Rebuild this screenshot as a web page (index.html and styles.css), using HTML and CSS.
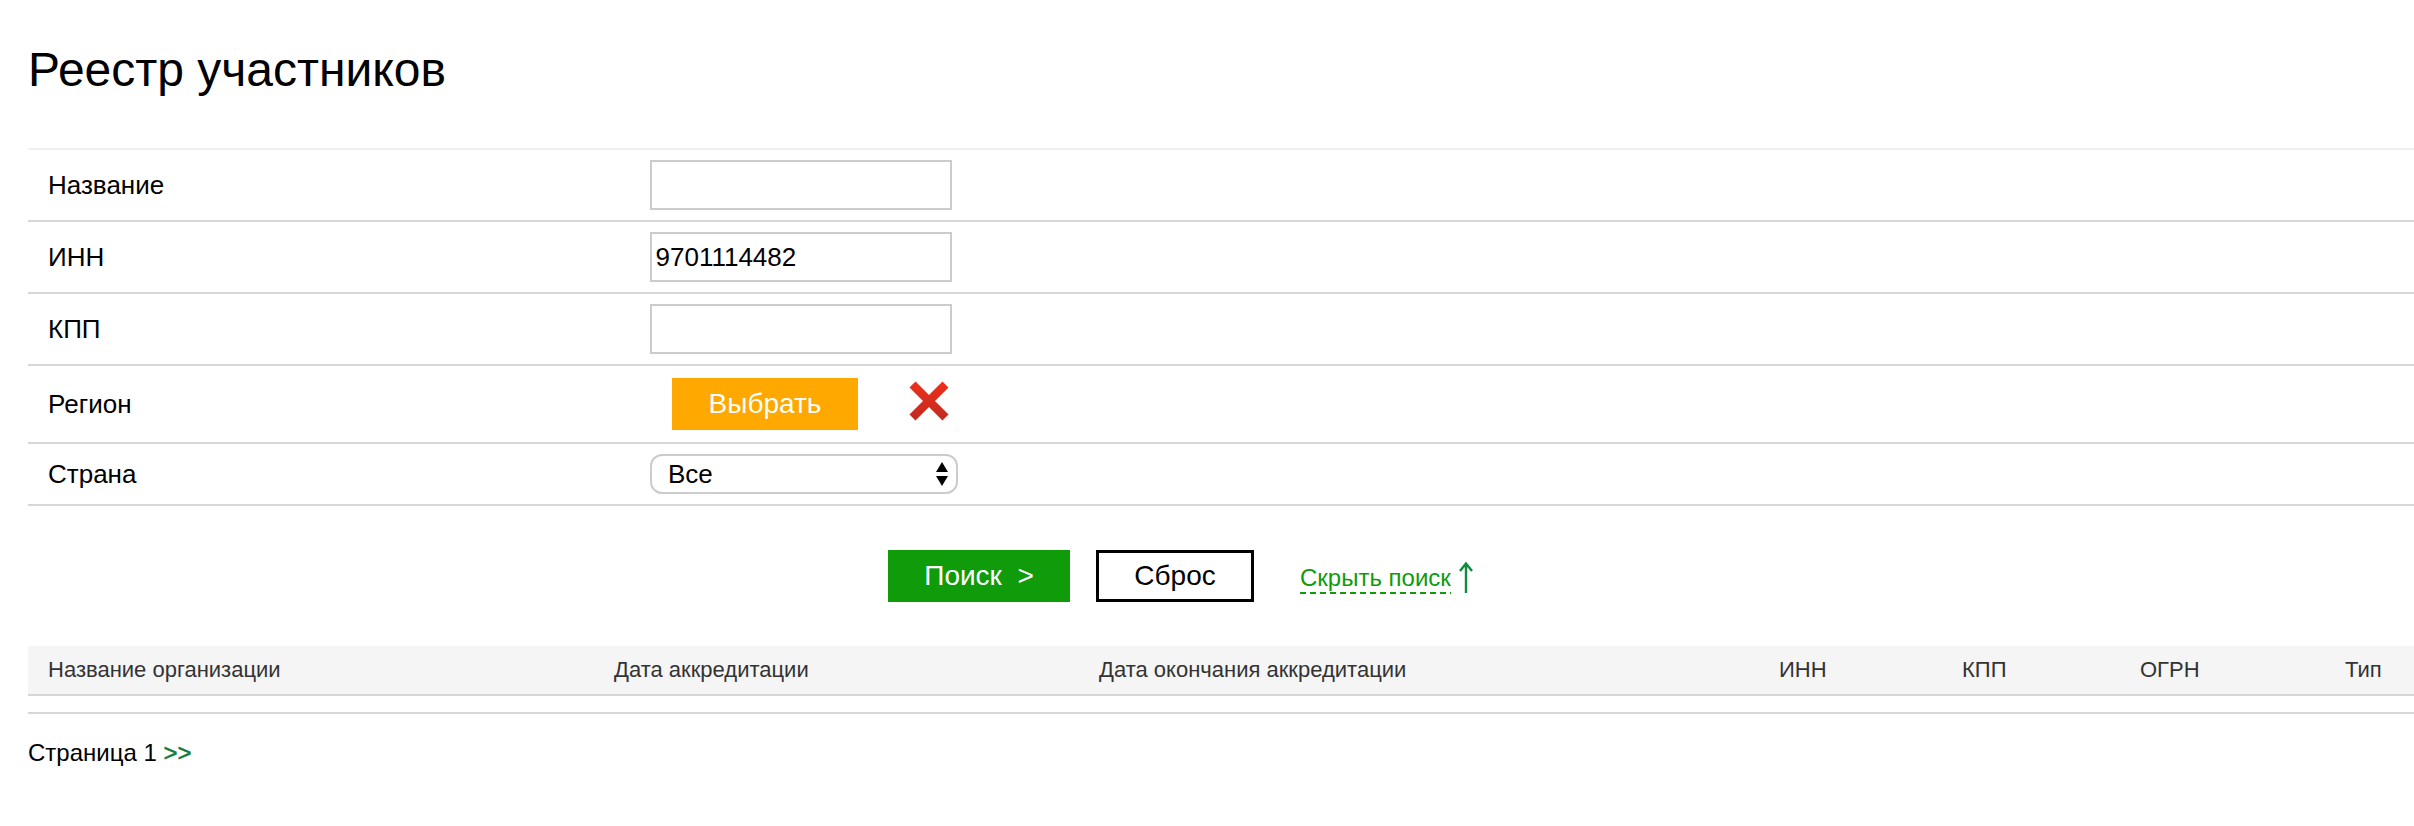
FILE: index.html
```html
<!DOCTYPE html>
<html lang="ru">
<head>
<meta charset="utf-8">
<title>Реестр участников</title>
<link rel="stylesheet" href="styles.css">
</head>
<body>
<main class="page">
  <h1 class="title">Реестр участников</h1>
  <form class="filters">
    <div class="row row-input first">
      <label class="label">Название</label>
      <input class="field" type="text">
    </div>
    <div class="row row-input">
      <label class="label">ИНН</label>
      <input class="field" type="text" value="9701114482">
    </div>
    <div class="row row-input">
      <label class="label">КПП</label>
      <input class="field" type="text">
    </div>
    <div class="row row-region">
      <label class="label">Регион</label>
      <div class="region-controls">
        <button class="btn btn-choose" type="button">Выбрать</button>
        <svg class="clear-icon" viewBox="0 0 42 42" width="42" height="42" aria-hidden="true">
          <defs>
            <linearGradient id="red" gradientUnits="userSpaceOnUse" x1="0" y1="0" x2="0" y2="42">
              <stop offset="0" stop-color="#f0301a"/>
              <stop offset="1" stop-color="#c02a20"/>
            </linearGradient>
          </defs>
          <path d="M4.5 4.5 L37.5 37.5 M37.5 4.5 L4.5 37.5" fill="none" stroke="url(#red)" stroke-width="8.5"/>
        </svg>
      </div>
    </div>
    <div class="row row-select">
      <label class="label">Страна</label>
      <div class="select-wrap">
        <select class="select"><option>Все</option></select>
        <svg class="select-arrows" viewBox="0 0 12 24" width="12" height="24" aria-hidden="true">
          <path d="M6 0 L12 10 H0 Z M0 14 H12 L6 24 Z" fill="#000"/>
        </svg>
      </div>
    </div>
    <div class="actions">
      <button class="btn btn-search" type="button">Поиск&nbsp; &gt;</button>
      <button class="btn btn-reset" type="button">Сброс</button>
      <a class="toggle" href="#"><span class="toggle-text">Скрыть поиск</span>
        <svg class="toggle-arrow" viewBox="0 0 14 31" width="14" height="31" aria-hidden="true">
          <path d="M7 31 V2 M1 9 L7 1.5 L13 9" fill="none" stroke="#0f8a3f" stroke-width="2.4"/>
        </svg>
      </a>
    </div>
  </form>
  <div class="results">
    <div class="thead">
      <span>Название организации</span>
      <span>Дата аккредитации</span>
      <span>Дата окончания аккредитации</span>
      <span>ИНН</span>
      <span>КПП</span>
      <span>ОГРН</span>
      <span>Тип</span>
    </div>
    <div class="tbody"></div>
  </div>
  <p class="pager">Страница 1 <a class="pager-next" href="#">&gt;&gt;</a></p>
</main>
</body>
</html>
```
FILE: styles.css
```css
* { box-sizing: border-box; }
html, body { margin: 0; padding: 0; background: #fff; }
body { font-family: "Liberation Sans", Arial, sans-serif; color: #000; overflow: hidden; }
.page { margin-left: 28px; height: 826px; }
.title { margin: 0; padding-top: 40px; height: 148px; font-size: 48px; line-height: 60px; font-weight: 400; }
.filters { display: block; }
.row { display: flex; align-items: center; border-bottom: 2px solid #d6d6d6; padding-left: 20px; }
.row.first { border-top: 2px solid #f0f0f0; }
.row-input { height: 72px; }
.row-input.first { height: 74px; }
.row-region { height: 78px; }
.row-select { height: 62px; }
.label { width: 602px; font-size: 26px; line-height: 30px; flex: none; }
.field { width: 302px; height: 50px; border: 2px solid #ccc; background: #fff; padding: 0 3.5px; font: 26px "Liberation Sans", Arial, sans-serif; color: #000; border-radius: 0; outline: none; }
.region-controls { display: flex; align-items: flex-start; margin-left: 22px; gap: 50px; }
.btn { border: 0; border-radius: 0; font: 28px "Liberation Sans", Arial, sans-serif; height: 52px; padding: 0; display: flex; align-items: center; justify-content: center; }
.btn-choose { width: 186px; background: #ffa800; color: #fff; }
.clear-icon { display: block; margin-top: 2px; }
.select-wrap { position: relative; width: 308px; height: 40px; }
.select { appearance: none; -webkit-appearance: none; width: 100%; height: 100%; border: 2px solid #ccc; border-radius: 12px; background: #fff; font: 26px "Liberation Sans", Arial, sans-serif; color: #000; padding: 0 0 0 16px; outline: none; }
.select-arrows { position: absolute; right: 10px; top: 8px; }
.actions { display: flex; align-items: flex-start; padding: 44px 0 0 860px; height: 140px; }
.btn-search { width: 182px; background: #0f9b0a; color: #fff; }
.btn-reset { width: 158px; margin-left: 26px; background: #fff; color: #000; border: 3px solid #000; }
.toggle { display: flex; align-items: flex-end; margin-left: 46px; height: 44px; text-decoration: none; color: #0f9b0a; font-size: 24px; }
.toggle-text { line-height: 28px; padding-bottom: 2px; background: repeating-linear-gradient(90deg, #0f9b0a 0 6px, transparent 6px 10px) left bottom / 100% 2px no-repeat; }
.toggle-arrow { display: block; margin: 0 0 1px 8px; }
.thead { display: grid; grid-template-columns: 586px 485px 680px 183px 178px 205px 1fr; height: 50px; padding: 0; align-items: center; background: #f5f5f5; border-bottom: 2px solid #d6d6d6; font-size: 22px; color: #333; }
.thead span:first-child { padding-left: 20px; }
.tbody { height: 18px; border-bottom: 2px solid #d6d6d6; }
.pager { margin: 25px 0 0; font-size: 24px; line-height: 28px; }
.pager-next { color: #0f7a3a; text-decoration: none; -webkit-text-stroke: 0.5px #0f7a3a; }
```
